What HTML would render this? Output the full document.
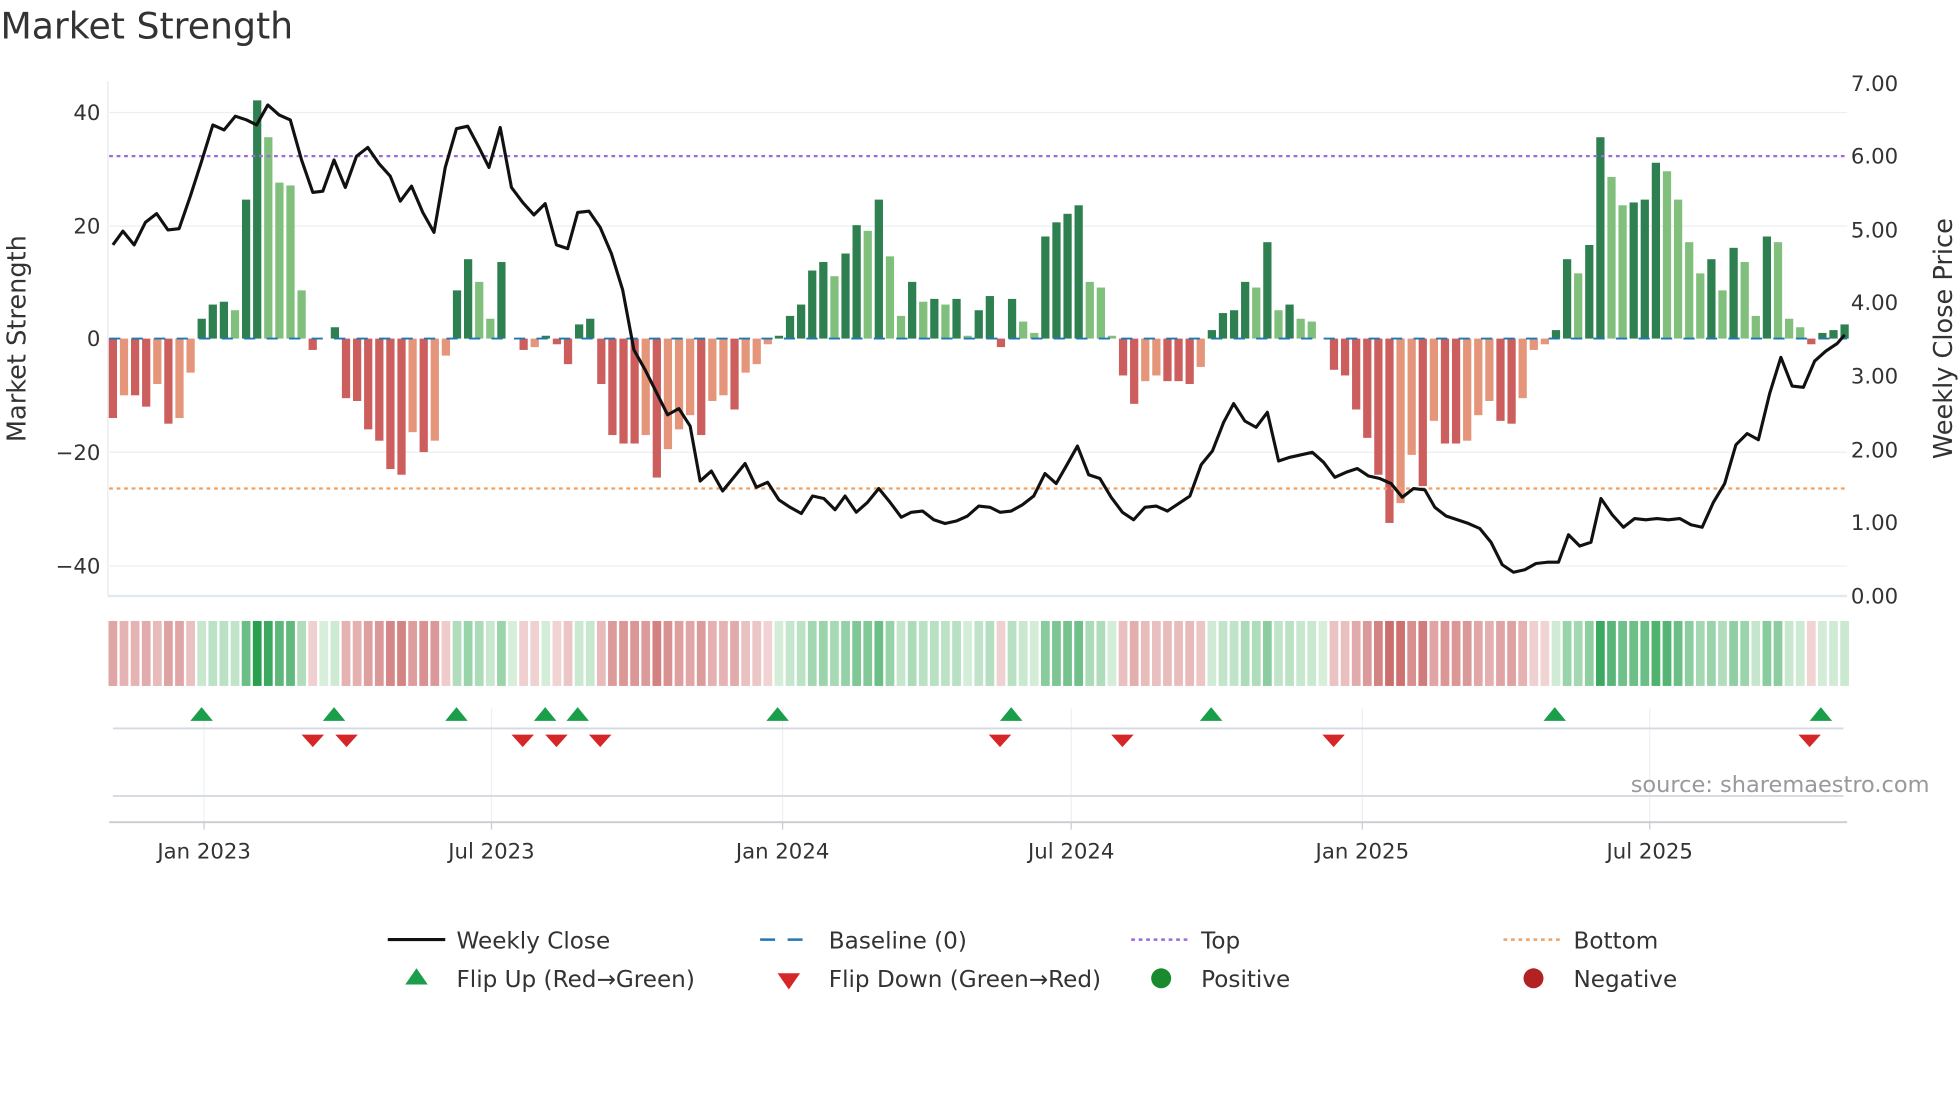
<!DOCTYPE html>
<html><head><meta charset="utf-8">
<style>
html,body{margin:0;padding:0;background:#fff;width:1960px;height:1102px;overflow:hidden}
svg{display:block}
text{font-family:"DejaVu Sans","Liberation Sans",sans-serif;fill:#333}
</style></head>
<body>
<svg id="s" width="1960" height="1102" viewBox="0 0 1568 882" xmlns="http://www.w3.org/2000/svg">
<text x="0" y="31" font-size="29">Market Strength</text>
<g stroke="#eceff2" stroke-width="1">
<line x1="87" y1="90" x2="1478" y2="90"/><line x1="87" y1="181" x2="1478" y2="181"/>
<line x1="87" y1="362" x2="1478" y2="362"/><line x1="87" y1="453" x2="1478" y2="453"/>
</g>
<line x1="86" y1="65" x2="86" y2="477" stroke="#e6e9ee"/>
<line x1="86" y1="477" x2="1478" y2="477" stroke="#e3e9f2" stroke-width="2"/>
<g id="bars"></g>
<line x1="87" y1="271" x2="1478" y2="271" stroke="#1f77b4" stroke-width="1.5" stroke-dasharray="9,9"/>
<line x1="87" y1="125" x2="1478" y2="125" stroke="#9b6bd6" stroke-width="1.8" stroke-dasharray="3,3"/>
<line x1="87" y1="391" x2="1478" y2="391" stroke="#f0a060" stroke-width="1.8" stroke-dasharray="3,3"/>
<polyline id="price" fill="none" stroke="#111" stroke-width="2.5" stroke-linejoin="round" points="90,196 98,185 107,196 116,178 125,171 134,184 143,183 152,157 161,129 170,100 179,104 188,93 197,96 205,100 214,84 223,92 232,96 241,128 250,154 258,153 267,128 276,150 285,125 294,118 303,131 312,141 320,161 329,149 338,170 347,186 356,134 365,103 374,101 383,118 391,134 400,102 409,150 418,162 427,172 436,163 445,196 454,199 462,170 471,169 480,182 489,203 498,232 507,280 516,296 525,314 534,332 543,327 552,341 560,385 569,377 578,393 587,382 596,371 605,390 614,386 623,400 632,406 641,411 650,397 659,399 668,408 676,397 685,410 694,402 703,391 712,402 721,414 729,410 738,409 747,416 756,419 765,417 774,413 783,405 792,406 800,410 809,409 818,404 827,397 836,379 845,387 853,373 862,357 871,380 880,383 889,398 898,410 907,416 916,406 925,405 934,409 943,403 952,397 961,372 970,361 979,338 987,323 996,337 1005,342 1014,330 1023,369 1032,366 1041,364 1050,362 1059,370 1068,382 1077,378 1086,375 1095,381 1104,383 1113,387 1122,398 1131,391 1140,392 1148,406 1157,413 1166,416 1175,419 1184,423 1193,434 1202,452 1211,458 1220,456 1229,451 1238,450 1247,450 1255,428 1264,437 1273,434 1281,399 1290,412 1299,422 1308,415 1317,416 1326,415 1335,416 1344,415 1353,420 1362,422 1371,402 1380,387 1389,356 1398,347 1407,352 1416,315 1425,286 1434,309 1443,310 1452,289 1461,281 1470,275 1476,268"/>
<g font-size="17" text-anchor="end">
<text x="80" y="96">40</text><text x="80" y="187">20</text><text x="80" y="277">0</text>
<text x="80" y="368">−20</text><text x="80" y="459">−40</text>
</g>
<g font-size="17">
<text x="1481" y="73">7.00</text><text x="1481" y="131">6.00</text><text x="1481" y="190">5.00</text>
<text x="1481" y="248">4.00</text><text x="1481" y="307">3.00</text><text x="1481" y="366">2.00</text>
<text x="1481" y="424">1.00</text><text x="1481" y="483">0.00</text>
</g>
<text font-size="20.5" text-anchor="middle" transform="translate(20,271) rotate(-90)">Market Strength</text>
<text font-size="20.5" text-anchor="middle" transform="translate(1562,271) rotate(-90)">Weekly Close Price</text>
<g id="strip"></g>
<g stroke="#eef0f3">
<line x1="163" y1="567" x2="163" y2="660"/><line x1="393" y1="567" x2="393" y2="660"/>
<line x1="626" y1="567" x2="626" y2="660"/><line x1="857" y1="567" x2="857" y2="660"/>
<line x1="1090" y1="567" x2="1090" y2="660"/><line x1="1320" y1="567" x2="1320" y2="660"/>
</g>
<line x1="90" y1="583" x2="1475" y2="583" stroke="#d5dae0" stroke-width="1.5"/>
<line x1="90" y1="637" x2="1475" y2="637" stroke="#d5dae0" stroke-width="1.5"/>
<line x1="87" y1="658" x2="1478" y2="658" stroke="#c9ccd1" stroke-width="1.5"/>
<g id="mk"></g>
<text x="1544" y="634" font-size="18" text-anchor="end" style="fill:#999">source: sharemaestro.com</text>
<g stroke="#c9ccd1"><line x1="163" y1="658" x2="163" y2="664"/><line x1="393" y1="658" x2="393" y2="664"/><line x1="626" y1="658" x2="626" y2="664"/><line x1="857" y1="658" x2="857" y2="664"/><line x1="1090" y1="658" x2="1090" y2="664"/><line x1="1320" y1="658" x2="1320" y2="664"/></g>
<g font-size="17" text-anchor="middle">
<text x="163" y="687">Jan 2023</text><text x="393" y="687">Jul 2023</text><text x="626" y="687">Jan 2024</text>
<text x="857" y="687">Jul 2024</text><text x="1090" y="687">Jan 2025</text><text x="1320" y="687">Jul 2025</text>
</g>
<line x1="310" y1="752" x2="356" y2="752" stroke="#111" stroke-width="2.5"/>
<line x1="608" y1="752" x2="652" y2="752" stroke="#1f77b4" stroke-width="2" stroke-dasharray="12,10"/>
<line x1="905" y1="752" x2="950" y2="752" stroke="#9b6bd6" stroke-width="2" stroke-dasharray="3,3"/>
<line x1="1203" y1="752" x2="1248" y2="752" stroke="#f0a060" stroke-width="2" stroke-dasharray="3,3"/>
<polygon points="324,788 342,788 333,775" fill="#1a9e4a"/>
<polygon points="622,779 640,779 631,792" fill="#d62728"/>
<circle cx="929" cy="783" r="8" fill="#1a8a2e"/>
<circle cx="1227" cy="783" r="8" fill="#b22222"/>
<g font-size="18.5">
<text x="365" y="759">Weekly Close</text><text x="663" y="759">Baseline (0)</text>
<text x="961" y="759">Top</text><text x="1259" y="759">Bottom</text>
<text x="365" y="790">Flip Up (Red→Green)</text><text x="663" y="790">Flip Down (Green→Red)</text>
<text x="961" y="790">Positive</text><text x="1259" y="790">Negative</text>
</g>
</svg>
<script>
var v=[-14,-10,-10,-12,-8,-15,-14,-6,3.5,6,6.5,5,24.5,42,35.5,27.5,27,8.5,-2,0,2,-10.5,-11,-16,-18,-23,-24,-16.5,-20,-18,-3,8.5,14,10,3.5,13.5,0,-2,-1.5,0.5,-1,-4.5,2.5,3.5,-8,-17,-18.5,-18.5,-17,-24.5,-19.5,-16,-13.5,-17,-11,-10,-12.5,-6,-4.5,-1,0.5,4,6,12,13.5,11,15,20,19,24.5,14.5,4,10,6.5,7,6,7,0.5,5,7.5,-1.5,7,3,1,18,20.5,22,23.5,10,9,0.5,
-6.5,-11.5,-7.5,-6.5,-7.5,-7.5,-8,-5,1.5,4.5,5,10,9,17,5,6,3.5,3,0,-5.5,-6.5,-12.5,-17.5,-24,-32.5,-29,-20.5,-26,-14.5,-18.5,-18.5,-18,-13.5,-11,-14.5,-15,-10.5,-2,-1,1.5,14,11.5,16.5,35.5,28.5,23.5,24,24.5,31,29.5,24.5,17,11.5,14,8.5,16,13.5,4,18,17,3.5,2,-1,1,1.5,2.5];
var NS="http://www.w3.org/2000/svg",n=v.length,st=(1386)/(n-1);
function el(t,a,p){var e=document.createElementNS(NS,t);for(var k in a)e.setAttribute(k,a[k]);p.appendChild(e);}
var B=document.getElementById('bars'),S=document.getElementById('strip'),M=document.getElementById('mk');
function mix(a,b,t){t=Math.max(0,Math.min(1,t));return 'rgb('+a.map(function(x,i){return Math.round(x+(b[i]-x)*t)}).join(',')+')';}
for(var i=0;i<n;i++){var x=90+i*st,y=v[i],p=i?v[i-1]:0,h=Math.abs(y)*4.54,c;
 if(y>=0)c=(y>=p)?'#2e8050':'#80bf7c';else c=(y<=p)?'#cc5e5e':'#e5967a';
 if(h>0.3)el('rect',{x:x-3.3,y:y>=0?271-h:271,width:6.6,height:h,fill:c},B);
 var sc=y>=0?mix([214,238,218],[40,160,80],y/40):mix([242,214,214],[204,110,110],-y/30);
 el('rect',{x:x-3.5,y:497,width:7,height:52,fill:sc},S);}
[161,267,365,436,462,622,809,969,1244,1457].forEach(function(x){el('polygon',{points:(x-9)+',577 '+(x+9)+',577 '+x+',566',fill:'#1a9e4a'},M);});
[250,277,418,445,480,800,898,1067,1448].forEach(function(x){el('polygon',{points:(x-9)+',588 '+(x+9)+',588 '+x+',598',fill:'#d62728'},M);});
</script>
</body></html>
